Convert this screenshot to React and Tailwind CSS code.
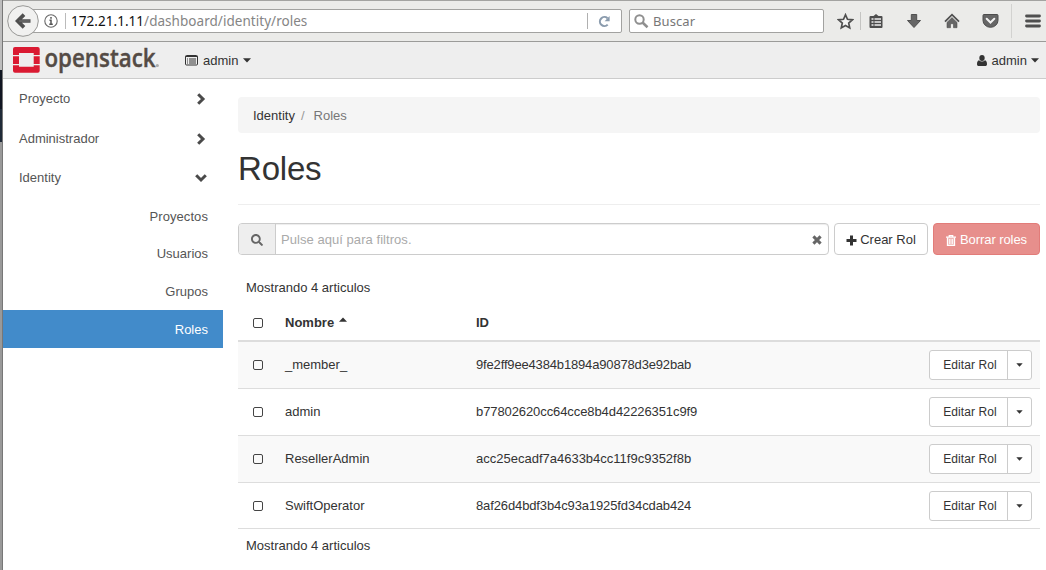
import React from "react";
import { FaSearch } from "react-icons/fa";

const roles = [
  { name: "_member_", id: "9fe2ff9ee4384b1894a90878d3e92bab", tracking: "tracking-[-0.16px]" },
  { name: "admin", id: "b77802620cc64cce8b4d42226351c9f9", tracking: "tracking-[-0.09px]" },
  { name: "ResellerAdmin", id: "acc25ecadf7a4633b4cc11f9c9352f8b", tracking: "tracking-normal" },
  { name: "SwiftOperator", id: "8af26d4bdf3b4c93a1925fd34cdab424", tracking: "tracking-[-0.12px]" },
];

function Caret({ className = "" }) {
  return (
    <svg className={className} width="8" height="5" viewBox="0 0 8 5">
      <path d="M0 .3h8L4 4.6z" fill="currentColor" />
    </svg>
  );
}

function Chevron({ className = "" }) {
  return (
    <svg className={className} width="12" height="12" viewBox="0 0 12 12">
      <path d="M3.2 1.2 8 6l-4.800 4.800" fill="none" stroke="#4a4a4a" strokeWidth="3" />
    </svg>
  );
}

function TrashIcon() {
  return (
    <svg width="10" height="11" viewBox="0 0 10 11" fill="none" stroke="white">
      <path d="M0 2.200h10M3.300 2V.6h3.400V2" strokeWidth="1.300" />
      <path d="M1.500 2.500v7.900h7V2.500" fill="white" fillOpacity=".35" strokeWidth="1.300" />
      <path d="M3.500 4v5M5 4v5M6.500 4v5" strokeWidth=".8" />
    </svg>
  );
}

function BrowserBar() {
  return (
    <div className="flex h-[42px] shrink-0 items-center border-t border-b border-t-[#a3a3a1] border-b-[#9b9b99] bg-[#ebebe9] pl-1 font-['Noto_Sans'] text-[13px]">
      <svg className="relative z-10 shrink-0" width="32" height="32" viewBox="0 0 32 32">
        <circle cx="16" cy="16" r="15.300" fill="#f1f1f0" stroke="#989896" />
        <path d="M23.500 16H11.500M17 9.600 10.600 16l6.400 6.400" fill="none" stroke="#4f4f4f" strokeWidth="3.700" />
        <path d="M22.700 16H12" stroke="#777" strokeWidth="1" />
      </svg>
      <div className="-ml-3 flex h-6 w-[595px] shrink-0 items-center rounded-r-xs border border-[#a2a2a0] bg-white pl-4">
        <svg width="14" height="14" viewBox="0 0 14 14">
          <circle cx="7" cy="7" r="6.200" fill="none" stroke="#696969" strokeWidth="1.100" />
          <path d="M7 3v1.700M5.500 6.300H7v4M5.300 10.300h3.500" fill="none" stroke="#555" strokeWidth="1.500" />
        </svg>
        <div className="ml-[7px] h-4 w-px bg-[#bbb]" />
        <div className="ml-[5px] flex-1 text-[13.500px] tracking-[0.04px] whitespace-nowrap text-[#858585]">
          <span className="text-[#111]">172.21.1.11</span>/dashboard/identity/roles
        </div>
        <div className="h-4 w-px bg-[#b0b0b0]" />
        <svg className="mr-2.5 ml-2.5" width="13" height="13" viewBox="0 0 13 13">
          <path d="M9.700 9.600A4.500 4.500 0 1 1 9.500 3.200" fill="none" stroke="#8a9bad" strokeWidth="2.100" />
          <path d="M6.600 6.200h5V1z" fill="#8a9bad" />
        </svg>
      </div>
      <div className="ml-[7px] flex h-6 w-[195px] shrink-0 items-center rounded-xs border border-[#a2a2a0] bg-white pl-1 text-[#777]">
        <svg width="15" height="15" viewBox="0 0 15 15" fill="none" stroke="#8f8f8f">
          <circle cx="5.500" cy="5.500" r="4.200" strokeWidth="2" />
          <path d="m8.500 8.500 5 4.800" strokeWidth="2.600" />
        </svg>
        <span className="ml-1 tracking-[0.1px]">Buscar</span>
      </div>
      <svg className="ml-[13px] shrink-0" width="17" height="17" viewBox="0 0 17 17">
        <path d="m8.500 1.800 2 4.500 4.800.5-3.600 3.300 1 4.800-4.200-2.500-4.200 2.500 1-4.800-3.600-3.300 4.800-.5z" fill="#f4f4f3" stroke="#4f4f4f" strokeWidth="1.700" />
      </svg>
      <div className="ml-[6px] h-[18px] w-px bg-[#c4c4c2]" />
      <svg className="ml-[7px] shrink-0" width="16" height="16" viewBox="0 0 16 16">
        <path d="M2.500 3h3L8 1l2.500 2h3a1 1 0 0 1 1 1V14a1 1 0 0 1-1 1h-11a1 1 0 0 1-1-1V4a1 1 0 0 1 1-1z" fill="#4d4d4d" />
        <path d="M3.500 6h2M3.500 9h2M3.500 12h2M6.500 6h6.500M6.500 9h6.500M6.500 12h6.500" stroke="#eee" strokeWidth="1.500" />
      </svg>
      <svg className="ml-[22px] shrink-0" width="16" height="16" viewBox="0 0 16 16">
        <path d="M5.300 1.500h5.400v6h3.800L8 14.500l-6.500-7h3.800z" fill="#666" stroke="#505050" />
      </svg>
      <svg className="ml-[22px] shrink-0" width="16" height="16" viewBox="0 0 16 16">
        <path d="m1 8.700 7-7 7 7" fill="none" stroke="#505050" strokeWidth="1.800" />
        <path d="M3 9.400 8 4.600l5 4.800v5.300H9.500v-4h-3v4H3z" fill="#666" stroke="#505050" strokeWidth=".6" />
      </svg>
      <svg className="ml-[22px] shrink-0" width="17" height="16" viewBox="0 0 17 16">
        <path d="M2 1.500h13a1 1 0 0 1 1 1V7.300a7.500 7 0 0 1-15 0V2.500a1 1 0 0 1 1-1z" fill="#666" stroke="#4c4c4c" />
        <path d="m4.700 5.800 3.800 3.700 3.800-3.700" fill="none" stroke="#f2f2f2" strokeWidth="2" strokeLinecap="round" />
      </svg>
      <div className="ml-3 h-[34px] w-px bg-[#d2d2d0]" />
      <svg className="ml-3 shrink-0" width="18" height="16" viewBox="0 0 18 16">
        <path d="M2.500 3h13M2.500 8h13M2.500 13h13" stroke="#4f4f4f" strokeWidth="2.800" strokeLinecap="round" />
      </svg>
    </div>
  );
}

function Header() {
  return (
    <header className="flex h-[37px] shrink-0 items-center border-b border-[#ccc] bg-[#eee] pr-[7px] pl-[10px] text-[#333]">
      <svg className="shrink-0" width="150" height="36" viewBox="0 0 150 36">
        <path
          d="M2 5h22.700a2 2 0 0 1 2 2V13h-6v-2H6v2H0V7a2 2 0 0 1 2-2zM0 14.300h6v7.700H0zM20.700 14.300h6v7.700h-6zM0 23.300h6v1.400h14.700v-1.400h6v5.500a2 2 0 0 1-2 2H2a2 2 0 0 1-2-2z"
          fill="#da1a32"
        />
        <text
          x="31.500"
          y="25"
          textLength="111"
          lengthAdjust="spacingAndGlyphs"
          fill="#544b45"
          stroke="#544b45"
          strokeWidth=".4"
          className="font-['Open_Sans'] text-[25.500px] font-semibold"
        >
          openstack
        </text>
        <circle cx="144.300" cy="23.500" r="1.600" fill="#aaa" />
      </svg>
      <div className="ml-[22px] flex flex-1 items-center pt-px">
        <svg width="13" height="11" viewBox="0 0 13 11">
          <rect x=".5" y=".5" width="12" height="9.500" rx="1" fill="none" stroke="#333" />
          <path d="M.5 1.500h12M4 4h7M4 6h7M4 8h7M2 4h1M2 6h1M2 8h1" stroke="#333" />
        </svg>
        <span className="ml-[5px]">admin</span>
        <Caret className="ml-[5px]" />
      </div>
      <div className="flex items-center pt-px">
        <svg width="10" height="11" viewBox="0 0 10 11" fill="currentColor">
          <ellipse cx="5" cy="3" rx="2.700" ry="3" />
          <path d="M2 5.200C.5 5.600 0 7.200 0 9.200 0 10.300.7 11 1.700 11h6.600c1 0 1.700-.7 1.700-1.800 0-2-.5-3.600-2-4a4 4 0 0 1-6 0z" />
        </svg>
        <span className="ml-[5px]">admin</span>
        <Caret className="ml-1" />
      </div>
    </header>
  );
}

function Sidebar() {
  return (
    <nav className="w-[220px] shrink-0 text-[#555]">
      <div className="flex h-[39px] items-center justify-between pr-4 pl-4">
        Proyecto <Chevron />
      </div>
      <div className="flex h-10 items-center justify-between pt-px pr-4 pl-4">
        Administrador <Chevron />
      </div>
      <div className="flex h-[39px] items-center justify-between pr-4 pl-4">
        Identity <Chevron className="rotate-90" />
      </div>
      <div className="flex h-[38px] items-center justify-end pt-0.5 pr-[15px] tracking-[0.08px]">Proyectos</div>
      <div className="flex h-[37px] items-center justify-end pr-[15px]">Usuarios</div>
      <div className="flex h-[38px] items-center justify-end pt-0.5 pr-[15px]">Grupos</div>
      <div className="flex h-[38px] items-center justify-end bg-[#428bca] pt-0.5 pr-[15px] text-white">Roles</div>
    </nav>
  );
}

function Checkbox() {
  return <div className="ml-[15px] h-[10px] w-[10px] rounded-[2px] border border-[#444]" />;
}

function RoleRow({ role, striped, last }) {
  return (
    <div className={`grid grid-cols-[47px_191px_1fr_111px] items-center border-b border-[#ddd] ${last ? "h-[46px]" : "h-[47px]"} ${striped ? "bg-[#f9f9f9]" : ""}`}>
      <Checkbox />
      <span>{role.name}</span>
      <span className={role.tracking}>{role.id}</span>
      <div className="flex h-[30px] w-[103px] rounded-[3px] border border-[#ccc] bg-white text-[12px]">
        <div className="flex w-[78px] items-center justify-center border-r border-[#ccc] pl-[3px] tracking-[0.1px]">Editar Rol</div>
        <div className="flex flex-1 items-center justify-center">
          <Caret className="h-[4px] w-[7px]" />
        </div>
      </div>
    </div>
  );
}

function Content() {
  return (
    <main className="ml-[15px] flex w-[802px] flex-col pt-[18px] text-[#333]">
      <div className="flex h-9 items-center rounded bg-[#f5f5f5] px-[15px] pt-0.5">
        <span>Identity</span>
        <span className="ml-[6px] text-[#999]">/</span>
        <span className="ml-[9px] text-[#777]">Roles</span>
      </div>
      <h1 className="mt-[17px] h-[55px] border-b border-[#eee] text-[33px] leading-[37px] tracking-[-0.2px]">Roles</h1>
      <div className="mt-[18px] flex h-8">
        <div className="flex w-[591px] rounded border border-[#ccc] shadow-[inset_0_1px_1px_rgba(0,0,0,0.075)]">
          <div className="flex w-[37px] items-center justify-center rounded-l-[3px] border-r border-[#ccc] bg-[#eee] pt-px text-[#666]">
            <FaSearch size={12} />
          </div>
          <span className="flex flex-1 items-center pt-0.5 pl-[5px] tracking-[0.05px] text-[#aaa]">Pulse aquí para filtros.</span>
          <svg className="mt-0.5 mr-[6px] self-center" width="10" height="10" viewBox="0 0 10 10">
            <path d="m1.400 1.400 7.200 7.200M8.600 1.400 1.400 8.600" stroke="#666" strokeWidth="3" />
          </svg>
        </div>
        <div className="ml-[5px] flex w-[94px] items-center justify-center rounded border border-[#ccc] pt-0.5">
          <svg width="11" height="11" viewBox="0 0 11 11">
            <path d="M5.500.5v10M.5 5.500h10" stroke="#333" strokeWidth="3" />
          </svg>
          <span className="ml-[3px]">Crear Rol</span>
        </div>
        <div className="ml-[5px] flex w-[107px] items-center justify-center rounded border border-[#e27c79] bg-[#e78f8c] pt-0.5 text-white">
          <TrashIcon />
          <span className="ml-1 tracking-[-0.08px]">Borrar roles</span>
        </div>
      </div>
      <div className="mt-[14px] flex h-[37px] items-center pl-2">Mostrando 4 articulos</div>
      <div className="grid h-[36px] grid-cols-[47px_191px_1fr] items-center border-b-2 border-[#ddd] font-bold">
        <Checkbox />
        <div className="flex items-center">
          Nombre
          <Caret className="mb-[7px] ml-[5px] rotate-180" />
        </div>
        <span>ID</span>
      </div>
      {roles.map((role, i) => (
        <RoleRow key={role.id} role={role} striped={i % 2 === 0} last={i === roles.length - 1} />
      ))}
      <div className="flex h-[33px] items-center pl-2">Mostrando 4 articulos</div>
    </main>
  );
}

export default function App() {
  return (
    <div className="flex h-[570px] w-[1046px] overflow-hidden bg-white font-['Liberation_Sans',sans-serif] text-[13px] leading-[18px]">
      <div className="flex w-[3px] shrink-0 flex-col border-r border-[#777] bg-[#999]">
        <div className="h-[70px] bg-[#bdbdbd]" />
        <div className="h-[39px] bg-[#111622]" />
        <div className="h-[33px] bg-[#1f2a38]" />
      </div>
      <div className="flex min-w-0 flex-1 flex-col">
        <BrowserBar />
        <Header />
        <div className="flex flex-1">
          <Sidebar />
          <Content />
        </div>
      </div>
    </div>
  );
}
